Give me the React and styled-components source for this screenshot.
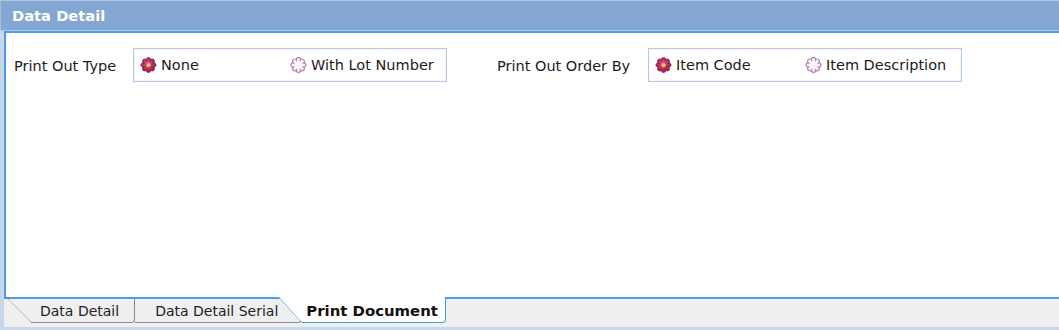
import React from "react";
import styled, { createGlobalStyle } from "styled-components";

const Global = createGlobalStyle`
  html, body { margin: 0; padding: 0; background: #ffffff; }
  body { font-family: "DejaVu Sans", "Liberation Sans", sans-serif; }
`;

const FONT = `"DejaVu Sans", "Liberation Sans", sans-serif`;

const Frame = styled.div`
  width: 1059px;
  height: 330px;
  background: #c9d7ea;
  display: flex;
  flex-direction: column;
  overflow: hidden;
  font-family: ${FONT};
  font-size: 14px;
  color: #1b1b1b;
`;

const Header = styled.div`
  height: 29px;
  flex: none;
  background: #83a6d3;
  border-top: 1px solid #b3c6e1;
  border-left: 1px solid #a6bddc;
  border-bottom: 1px solid #b2c9e7;
  display: flex;
  align-items: center;
  padding-left: 11px;
  font-weight: bold;
  font-size: 14.7px;
  color: #ffffff;
`;

const Body = styled.div`
  margin-left: 4px;
  display: flex;
  flex-direction: column;
`;

const Panel = styled.div`
  height: 268px;
  box-sizing: border-box;
  background: #ffffff;
  border: 2px solid #4a9de2;
  border-right: none;
  padding: 15px 0 0 8px;
`;

const Row = styled.div`
  display: flex;
  align-items: center;
  gap: 50px;
`;

const Field = styled.div`
  display: flex;
  align-items: center;
`;

const Label = styled.div`
  width: ${(p) => p.$w}px;
  font-size: 14.5px;
  padding-top: 1px;
  white-space: nowrap;
`;

const GroupBox = styled.div`
  width: 306px;
  height: 32px;
  border: 1px solid #b7c8e2;
  box-shadow: inset 0 0 0 1px #f4f7fc;
  display: flex;
  align-items: center;
  padding-left: 6px;
`;

const Option = styled.div`
  width: 150px;
  display: flex;
  align-items: center;
  gap: 4px;
  font-size: 14.5px;
  white-space: nowrap;
`;

const TabStrip = styled.div`
  height: 28px;
  background: #efefef;
  display: flex;
  align-items: flex-start;
  padding-left: 3px;
`;

const Tab = styled.div`
  position: relative;
  z-index: ${(p) => p.$z};
  height: ${(p) => (p.$active ? 26 : 24)}px;
  margin-top: ${(p) => (p.$active ? -2 : 0)}px;
  padding-top: ${(p) => (p.$active ? 2 : 0)}px;
  margin-left: ${(p) => (p.$first ? 0 : -24)}px;
  padding-left: ${(p) => p.$pl}px;
  padding-right: ${(p) => p.$pr}px;
  box-sizing: border-box;
  display: flex;
  align-items: center;
  font-size: ${(p) => (p.$active ? 14.9 : 14)}px;
  font-weight: ${(p) => (p.$active ? "bold" : "normal")};
  color: ${(p) => (p.$active ? "#111111" : "#222222")};
  white-space: nowrap;

  &::before {
    content: "";
    position: absolute;
    z-index: -1;
    left: 0;
    top: 0;
    bottom: 0;
    width: 30px;
    transform-origin: top left;
    transform: skewX(${(p) => (p.$active ? 42 : 45)}deg);
    background: ${(p) => (p.$active ? "#ffffff" : "#efefef")};
    border-left: 1px solid ${(p) => (p.$active ? "#4a9de2" : "#8a8a8a")};
    border-bottom: 1px solid ${(p) => (p.$active ? "#4a9de2" : "#8a8a8a")};
    border-bottom-left-radius: 3px;
  }

  &::after {
    content: "";
    position: absolute;
    z-index: -1;
    left: 24px;
    right: 0;
    top: 0;
    bottom: 0;
    background: ${(p) => (p.$active ? "#ffffff" : "#efefef")};
    border-right: 1px solid ${(p) => (p.$active ? "#4a9de2" : "#8a8a8a")};
    border-bottom: 1px solid ${(p) => (p.$active ? "#4a9de2" : "#8a8a8a")};
    border-bottom-right-radius: 4px;
  }
`;

function scallopPath(cx, cy, R, r, n) {
  const pts = [];
  for (let i = 0; i < n; i++) {
    const a = ((i + 0.5) * 2 * Math.PI) / n - Math.PI / 2;
    pts.push([cx + R * Math.cos(a), cy + R * Math.sin(a)]);
  }
  let d = `M${pts[0][0].toFixed(2)},${pts[0][1].toFixed(2)}`;
  for (let i = 1; i <= n; i++) {
    const p = pts[i % n];
    d += ` A${r},${r} 0 1 1 ${p[0].toFixed(2)},${p[1].toFixed(2)}`;
  }
  return d + " Z";
}

const FLOWER = scallopPath(8, 8, 4.7, 2.1, 8);

function RadioIcon({ checked, id }) {
  return (
    <svg width="17" height="16" viewBox="0 0 16 16">
      <defs>
        <radialGradient id={`g${id}`} cx="45%" cy="40%" r="65%">
          {checked ? (
            <>
              <stop offset="0%" stopColor="#d24a83" />
              <stop offset="100%" stopColor="#9a1c4b" />
            </>
          ) : (
            <>
              <stop offset="0%" stopColor="#ffffff" />
              <stop offset="65%" stopColor="#fbf3fa" />
              <stop offset="100%" stopColor="#e6c8e4" />
            </>
          )}
        </radialGradient>
      </defs>
      <path
        d={FLOWER}
        fill={`url(#g${id})`}
        stroke={checked ? "#8a1945" : "#b677b6"}
        strokeWidth={checked ? 0.9 : 1.1}
        strokeLinejoin="round"
      />
      {checked && (
        <circle cx="8" cy="8" r="2.1" fill="#f6cc4c" stroke="#e4903c" strokeWidth="0.6" />
      )}
    </svg>
  );
}

function RadioGroup({ options, selected, name }) {
  return (
    <GroupBox>
      {options.map((o, i) => (
        <Option key={o}>
          <RadioIcon checked={i === selected} id={`${name}${i}`} />
          {o}
        </Option>
      ))}
    </GroupBox>
  );
}

export default function App() {
  return (
    <>
      <Global />
      <Frame>
        <Header>Data Detail</Header>
        <Body>
          <Panel>
            <Row>
              <Field>
                <Label $w={119}>Print Out Type</Label>
                <RadioGroup name="type" options={["None", "With Lot Number"]} selected={0} />
              </Field>
              <Field>
                <Label $w={151}>Print Out Order By</Label>
                <RadioGroup name="order" options={["Item Code", "Item Description"]} selected={0} />
              </Field>
            </Row>
          </Panel>
          <TabStrip>
            <Tab $first $z={3} $pl={33} $pr={16}>Data Detail</Tab>
            <Tab $z={2} $pl={44} $pr={24}>Data Detail Serial</Tab>
            <Tab $active $z={5} $pl={28} $pr={8}>Print Document</Tab>
          </TabStrip>
        </Body>
      </Frame>
    </>
  );
}
